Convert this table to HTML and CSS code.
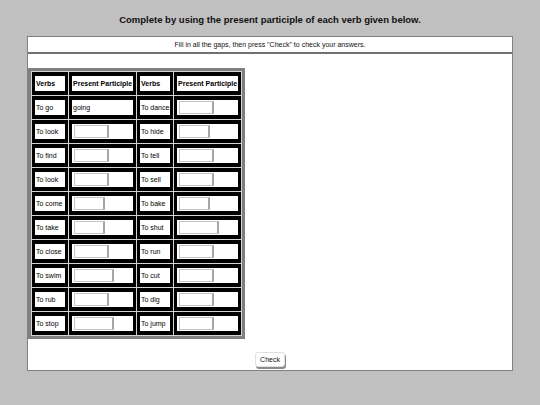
FILE: index.html
```html
<!DOCTYPE html>
<html>
<head>
<meta charset="utf-8">
<link rel="stylesheet" href="styles.css">
</head>
<body>
<div class="title">Complete by using the present participle of each verb given below.</div>
<div class="panel">
  <div class="instr">Fill in all the gaps, then press "Check" to check your answers.</div>
  <div class="content">
    <table class="grid">
      <tr><td class="v b">Verbs</td><td class="p b">Present Participle</td><td class="v b">Verbs</td><td class="p b">Present Participle</td></tr>
      <tr><td class="v">To go</td><td class="p">going</td><td class="v">To dance</td><td class="p"><input class="w35"></td></tr>
      <tr><td class="v">To look</td><td class="p"><input class="w35"></td><td class="v">To hide</td><td class="p"><input class="w31"></td></tr>
      <tr><td class="v">To find</td><td class="p"><input class="w35"></td><td class="v">To tell</td><td class="p"><input class="w35"></td></tr>
      <tr><td class="v">To look</td><td class="p"><input class="w35"></td><td class="v">To sell</td><td class="p"><input class="w35"></td></tr>
      <tr><td class="v">To come</td><td class="p"><input class="w31"></td><td class="v">To bake</td><td class="p"><input class="w31"></td></tr>
      <tr><td class="v">To take</td><td class="p"><input class="w31"></td><td class="v">To shut</td><td class="p"><input class="w40"></td></tr>
      <tr><td class="v">To close</td><td class="p"><input class="w35"></td><td class="v">To run</td><td class="p"><input class="w35"></td></tr>
      <tr><td class="v">To swim</td><td class="p"><input class="w40"></td><td class="v">To cut</td><td class="p"><input class="w35"></td></tr>
      <tr><td class="v">To rub</td><td class="p"><input class="w35"></td><td class="v">To dig</td><td class="p"><input class="w35"></td></tr>
      <tr><td class="v">To stop</td><td class="p"><input class="w40"></td><td class="v">To jump</td><td class="p"><input class="w35"></td></tr>
    </table>
    <button class="check">Check</button>
  </div>
</div>
</body>
</html>
```
FILE: styles.css
```css
html, body {
  margin: 0;
  padding: 0;
  background: #c0c0c0;
  font-family: "Liberation Sans", Arial, sans-serif;
  color: #111;
}
.title {
  height: 36px;
  box-sizing: border-box;
  padding-top: 2px;
  display: flex;
  align-items: center;
  justify-content: center;
  font-size: 9.5px;
  font-weight: bold;
}
.panel {
  margin: 0 27px;
  background: #fff;
  border: 1px solid #808080;
}
.instr {
  height: 15px;
  line-height: 15px;
  font-size: 7px;
  text-align: center;
  border-bottom: 2px solid #707070;
}
.content {
  display: flex;
  flex-direction: column;
  align-items: flex-start;
  padding: 13px 0 3px 0;
}
.grid {
  border-collapse: separate;
  border-spacing: 1px;
  background: #d4d4d4;
  border: 3px solid #808080;
  margin-top: 1px;
}
.grid td {
  background: #fff;
  border-style: solid;
  border-color: #000;
  border-width: 4px 3px;
  padding: 0 0 0 1px;
  height: 15px;
  line-height: 15px;
  font-size: 7px;
  color: #000;
  vertical-align: middle;
  white-space: nowrap;
}
.grid td.v { width: 29px; }
.grid td.p { width: 60px; }
.grid td.b { font-weight: bold; }
.grid input {
  display: block;
  box-sizing: border-box;
  height: 13px;
  margin: 0 0 0 1px;
  padding: 0;
  border: 1px solid #c4c4c4;
  border-right: 2px solid #a6a6a6;
  background: #fff;
  font-size: 7px;
}
.w31 { width: 31px; }
.w35 { width: 35px; }
.w40 { width: 40px; }
.check {
  align-self: center;
  margin-top: 13px;
  height: 15px;
  padding: 0 4px;
  font-family: "Liberation Sans", Arial, sans-serif;
  font-size: 7px;
  color: #111;
  background: #fff;
  border: 1px solid #e0e0e0;
  border-radius: 3px;
  box-shadow: 1px 2px 0 #8a8a8a;
}
```
